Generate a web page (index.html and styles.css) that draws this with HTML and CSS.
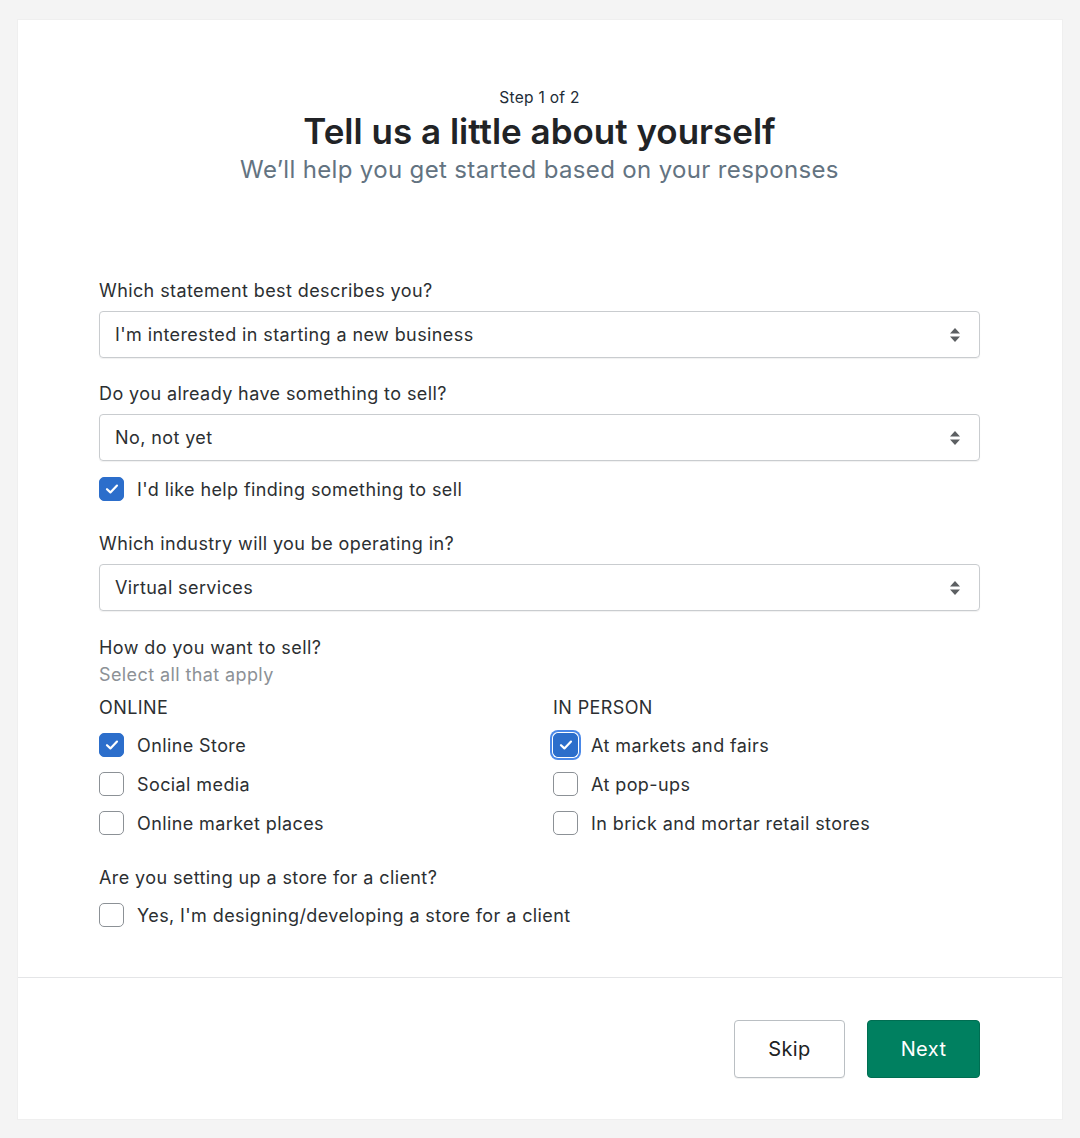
FILE: index.html
```html
<!DOCTYPE html>
<html lang="en">
<head>
<meta charset="utf-8">
<title>Tell us a little about yourself</title>
<link rel="stylesheet" href="styles.css">
</head>
<body>
<div class="card">
  <div class="card-body">
    <header class="head">
      <div class="step">Step 1 of 2</div>
      <h1 class="title">Tell us a little about yourself</h1>
      <p class="subtitle">We’ll help you get started based on your responses</p>
    </header>

    <form class="form">
      <div class="field">
        <label class="label">Which statement best describes you?</label>
        <div class="select"><span>I'm interested in starting a new business</span>
          <svg class="arrows" width="12" height="16" viewBox="0 0 12 16"><path d="M6 1 L11 6.5 H1 Z M6 15 L11 9.5 H1 Z" fill="#5c5f62"/></svg>
        </div>
      </div>

      <div class="field field-2">
        <label class="label">Do you already have something to sell?</label>
        <div class="select"><span>No, not yet</span>
          <svg class="arrows" width="12" height="16" viewBox="0 0 12 16"><path d="M6 1 L11 6.5 H1 Z M6 15 L11 9.5 H1 Z" fill="#5c5f62"/></svg>
        </div>
      </div>

      <div class="check-row help-row">
        <span class="box checked"><svg width="14" height="12" viewBox="0 0 14 12"><path d="M2 6.2 L5.4 9.4 L12 2.6" fill="none" stroke="#fff" stroke-width="2.2" stroke-linecap="round" stroke-linejoin="round"/></svg></span>
        <span>I'd like help finding something to sell</span>
      </div>

      <div class="field field-3">
        <label class="label">Which industry will you be operating in?</label>
        <div class="select"><span>Virtual services</span>
          <svg class="arrows" width="12" height="16" viewBox="0 0 12 16"><path d="M6 1 L11 6.5 H1 Z M6 15 L11 9.5 H1 Z" fill="#5c5f62"/></svg>
        </div>
      </div>

      <div class="sell">
        <div class="label">How do you want to sell?</div>
        <div class="hint">Select all that apply</div>
        <div class="cols">
          <div class="col">
            <div class="col-title">ONLINE</div>
            <div class="check-row">
              <span class="box checked"><svg width="14" height="12" viewBox="0 0 14 12"><path d="M2 6.2 L5.4 9.4 L12 2.6" fill="none" stroke="#fff" stroke-width="2.2" stroke-linecap="round" stroke-linejoin="round"/></svg></span>
              <span>Online Store</span>
            </div>
            <div class="check-row">
              <span class="box"></span>
              <span>Social media</span>
            </div>
            <div class="check-row">
              <span class="box"></span>
              <span>Online market places</span>
            </div>
          </div>
          <div class="col">
            <div class="col-title">IN PERSON</div>
            <div class="check-row">
              <span class="box checked focused"><svg width="14" height="12" viewBox="0 0 14 12"><path d="M2 6.2 L5.4 9.4 L12 2.6" fill="none" stroke="#fff" stroke-width="2.2" stroke-linecap="round" stroke-linejoin="round"/></svg></span>
              <span>At markets and fairs</span>
            </div>
            <div class="check-row">
              <span class="box"></span>
              <span>At pop-ups</span>
            </div>
            <div class="check-row">
              <span class="box"></span>
              <span>In brick and mortar retail stores</span>
            </div>
          </div>
        </div>
      </div>

      <div class="client">
        <div class="label">Are you setting up a store for a client?</div>
        <div class="check-row client-row">
          <span class="box"></span>
          <span>Yes, I'm designing/developing a store for a client</span>
        </div>
      </div>
    </form>
  </div>
  <footer class="card-foot">
    <button class="btn btn-skip" type="button">Skip</button>
    <button class="btn btn-next" type="button">Next</button>
  </footer>
</div>
</body>
</html>
```

FILE: styles.css
```css
* { box-sizing: border-box; }

body {
  margin: 0;
  background: #f4f4f4;
  font-family: "Inter", "Noto Sans", "Liberation Sans", sans-serif;
  color: #333638;
}

.card {
  margin: 20px 18px 19px 18px;
  background: #fff;
  box-shadow: 0 0 0 1px #efefef;
}

.card-body {
  padding: 68px 82px 50px 81px;
}

.head {
  text-align: center;
}

.step {
  font-size: 15.5px;
  line-height: 20px;
  color: #212b36;
  letter-spacing: 0.3px;
}

.title {
  margin: 3px 0 0;
  font-size: 35px;
  line-height: 40px;
  font-weight: 600;
  color: #212326;
  letter-spacing: 0;
}

.subtitle {
  margin: 4px 0 0;
  font-size: 24px;
  line-height: 30px;
  color: #637381;
  letter-spacing: 0.35px;
}

.form {
  margin-top: 94px;
  display: flex;
  flex-direction: column;
}

.label {
  display: block;
  font-size: 18px;
  line-height: 24px;
  color: #2c2f32;
  letter-spacing: 0.4px;
}

.select {
  margin-top: 8px;
  height: 47px;
  border: 1px solid #c9cccf;
  border-radius: 4px;
  box-shadow: 0 1px 1px rgba(0,0,0,0.06);
  display: flex;
  align-items: center;
  justify-content: space-between;
  padding: 0 18px 0 15px;
  font-size: 18px;
  color: #2c2f32;
  letter-spacing: 0.4px;
}

.arrows { display: block; }

.field-2 { margin-top: 24px; }

.check-row {
  display: flex;
  align-items: center;
  gap: 13px;
  height: 24px;
  font-size: 18px;
  color: #2c2f32;
  letter-spacing: 0.4px;
}

.help-row { margin-top: 16px; }

.field-3 { margin-top: 31px; }

.box {
  width: 25px;
  height: 24px;
  border: 1.5px solid #8c9196;
  border-radius: 5px;
  background: #fff;
  flex: none;
  display: flex;
  align-items: center;
  justify-content: center;
}

.box.checked {
  background: #2c6ecb;
  border-color: #2c6ecb;
}

.box.focused {
  box-shadow: 0 0 0 1px #fff, 0 0 0 3px #4a88e8;
}

.sell { margin-top: 25px; }

.hint {
  margin-top: 3px;
  font-size: 18px;
  line-height: 24px;
  color: #8c9196;
  letter-spacing: 0.4px;
}

.cols {
  margin-top: 9px;
  display: grid;
  grid-template-columns: 1fr 1fr;
  column-gap: 27px;
}

.col {
  display: flex;
  flex-direction: column;
  gap: 15px;
}

.col-title {
  font-size: 18px;
  line-height: 24px;
  color: #2c2f32;
  margin-bottom: -2px;
  letter-spacing: 0.4px;
}

.client { margin-top: 31px; }
.client-row { margin-top: 13px; }

.card-foot {
  border-top: 1px solid #e4e5e7;
  padding: 42px 82px 41px;
  display: flex;
  justify-content: flex-end;
  gap: 22px;
}

.btn {
  height: 58px;
  border-radius: 4px;
  font-family: inherit;
  font-size: 20px;
  letter-spacing: 0.4px;
  cursor: pointer;
}

.btn-skip {
  width: 111px;
  background: #fff;
  border: 1px solid #babfc3;
  color: #202223;
  box-shadow: 0 1px 0 rgba(0,0,0,0.05);
}

.btn-next {
  width: 113px;
  background: #008060;
  border: 1px solid #006e52;
  color: #fff;
}
```
